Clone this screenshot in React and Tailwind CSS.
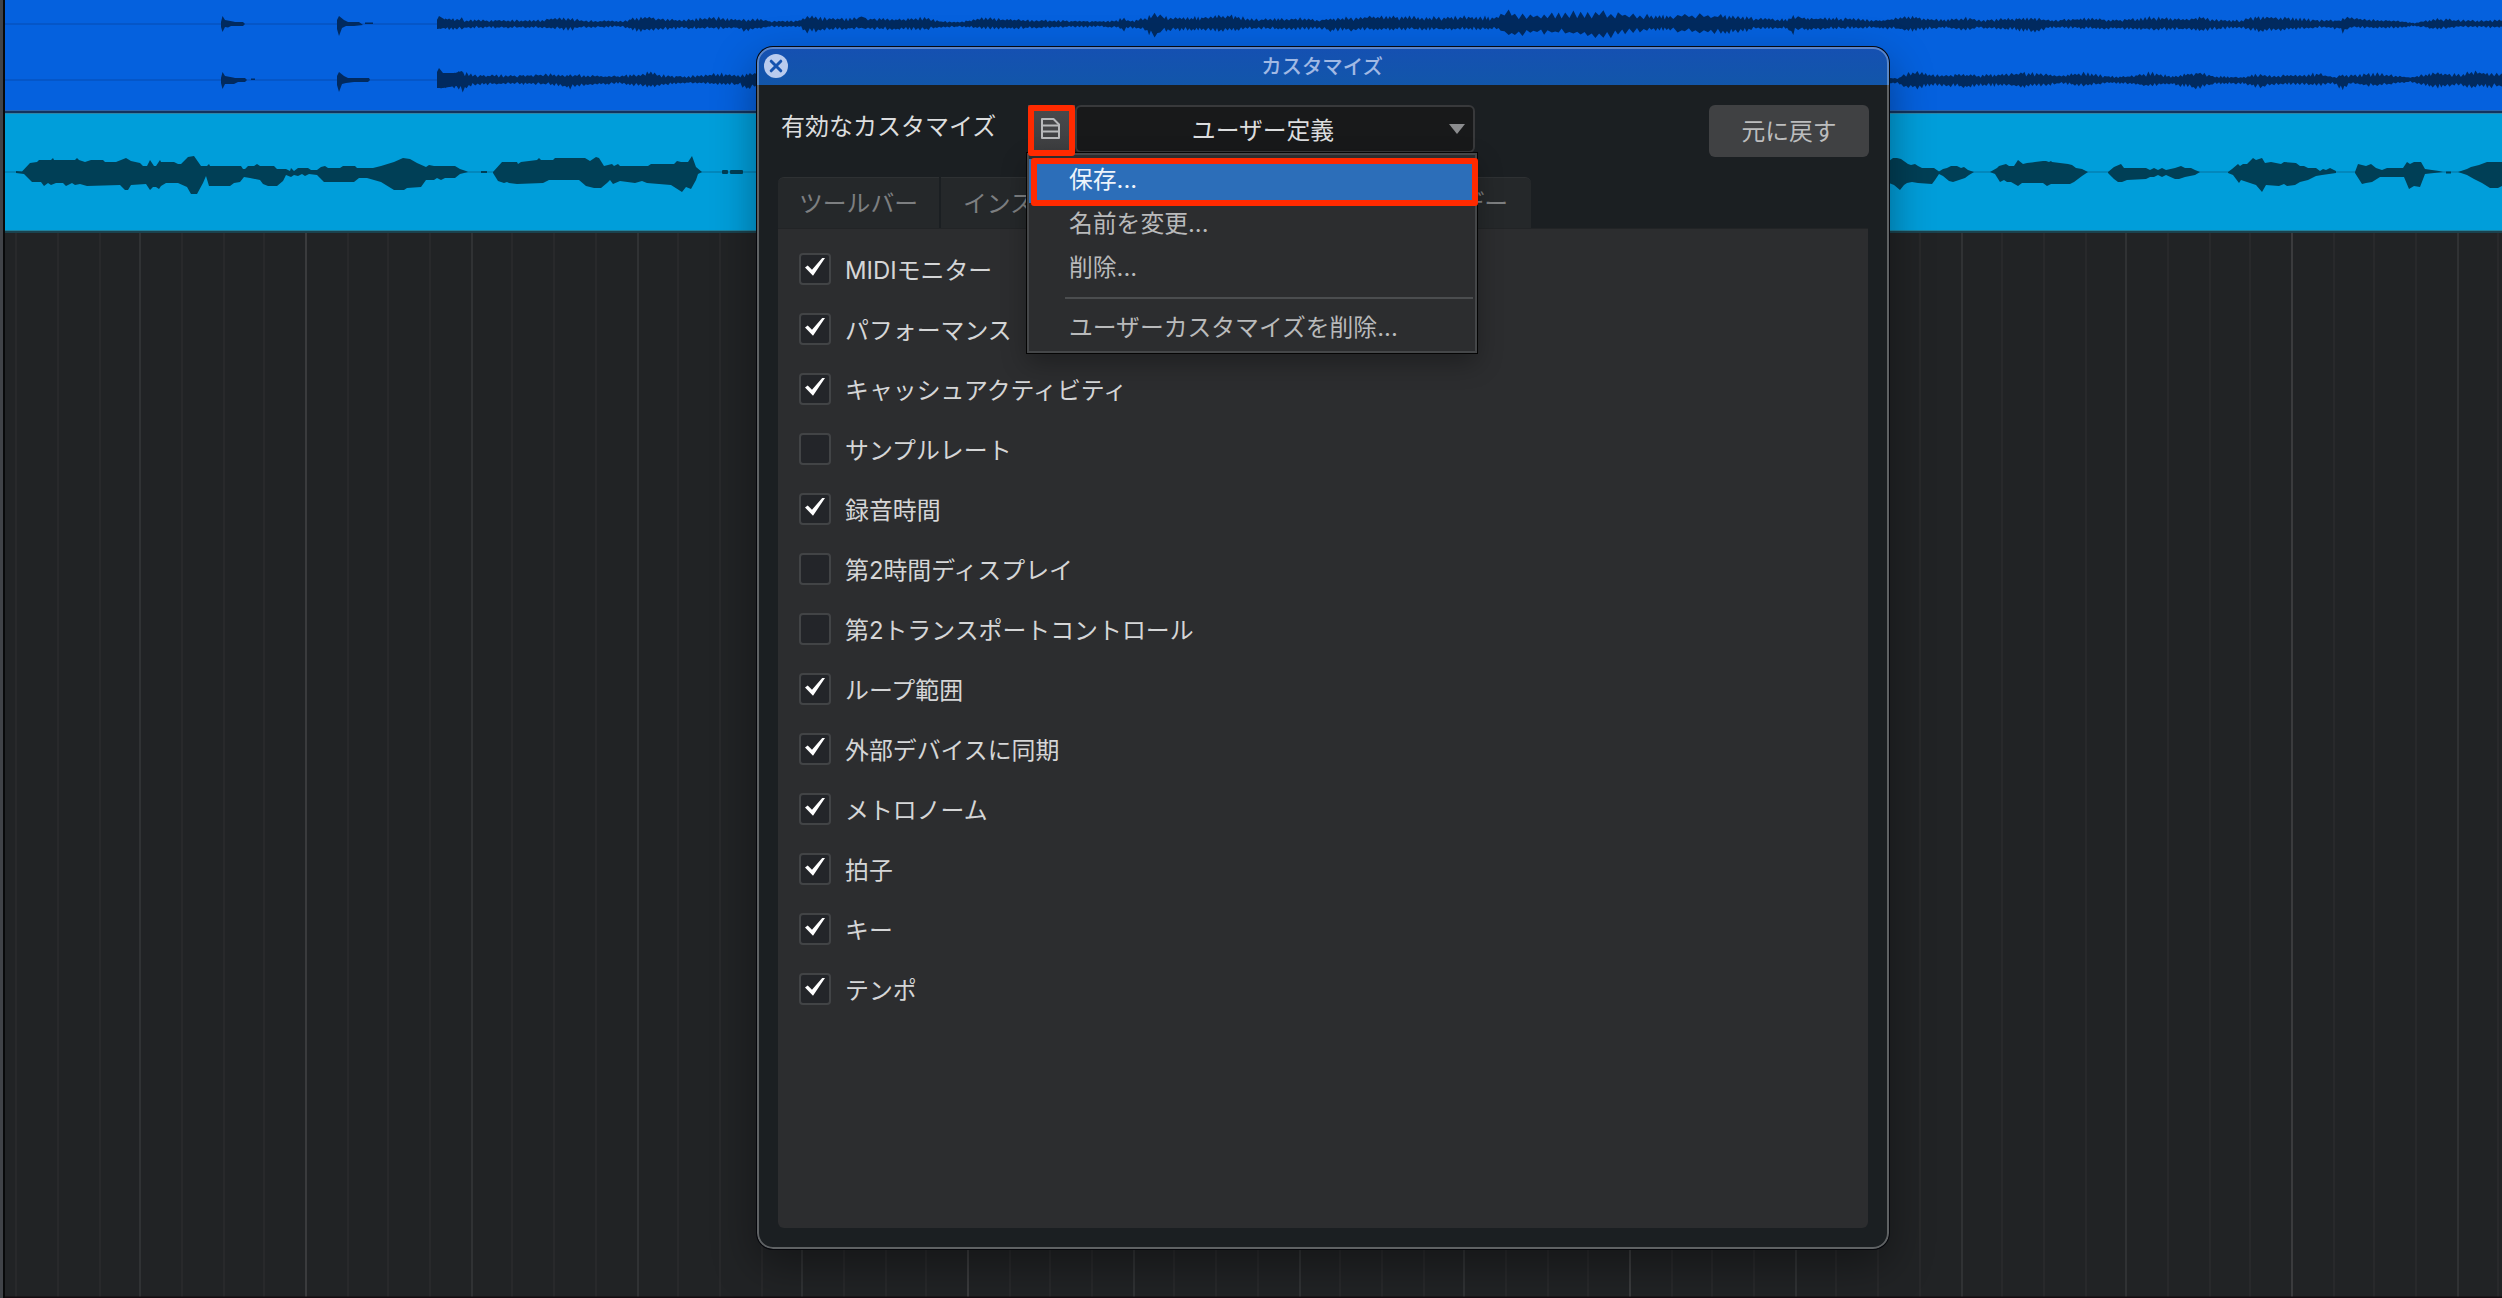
import { useState } from "react";
import clsx from "clsx";

const FONT = "font-['Inter','Noto_Sans_CJK_JP',sans-serif]";

const OPTIONS = [
  { label: "MIDIモニター", checked: true },
  { label: "パフォーマンス", checked: true },
  { label: "キャッシュアクティビティ", checked: true },
  { label: "サンプルレート", checked: false },
  { label: "録音時間", checked: true },
  { label: "第2時間ディスプレイ", checked: false },
  { label: "第2トランスポートコントロール", checked: false },
  { label: "ループ範囲", checked: true },
  { label: "外部デバイスに同期", checked: true },
  { label: "メトロノーム", checked: true },
  { label: "拍子", checked: true },
  { label: "キー", checked: true },
  { label: "テンポ", checked: true },
];

// envelope points: x, height above the centre line, depth below it
const STEREO_TOP = [
  [437, 6, 5], [463, 6, 6], [466, 3, 4], [470, 4, 4], [540, 4, 4], [550, 6, 5], [572, 6, 6], [580, 4, 4],
  [615, 3, 3], [628, 4, 4], [634, 7, 7], [650, 7, 7], [660, 6, 6], [680, 4, 5], [718, 7, 5], [735, 5, 4],
  [747, 5, 8], [755, 6, 5], [770, 3, 3], [800, 4, 3], [807, 8, 9], [830, 6, 6], [858, 6, 5], [861, 12, 5],
  [864, 6, 5], [900, 5, 6], [925, 7, 6], [940, 3, 4], [960, 2, 3], [985, 7, 5], [1000, 5, 5], [1040, 4, 4],
  [1100, 3, 3], [1118, 4, 4], [1123, 8, 7], [1130, 3, 4], [1145, 6, 6], [1154, 12, 15], [1160, 10, 9],
  [1172, 7, 6], [1200, 7, 7], [1230, 9, 7], [1255, 5, 5], [1300, 6, 6], [1320, 4, 5], [1330, 6, 7],
  [1380, 8, 6], [1440, 7, 6], [1470, 8, 6], [1498, 7, 5], [1503, 15, 10], [1515, 10, 13], [1530, 9, 9],
  [1560, 11, 10], [1580, 12, 11], [1606, 12, 14], [1630, 10, 8], [1660, 8, 6], [1680, 10, 8], [1720, 9, 9],
  [1740, 8, 9], [1755, 6, 5], [1788, 5, 5], [1791, 7, 14], [1795, 10, 7], [1808, 6, 6], [1840, 6, 5],
  [1880, 4, 4], [1910, 8, 7], [1925, 6, 6], [1945, 4, 4], [1968, 7, 7], [1980, 4, 4], [2025, 7, 7],
  [2038, 6, 8], [2050, 4, 4], [2090, 6, 5], [2120, 4, 5], [2150, 7, 6], [2190, 5, 6], [2200, 8, 8],
  [2210, 5, 6], [2240, 4, 4], [2260, 8, 8], [2300, 6, 5], [2320, 4, 4], [2340, 4, 5], [2343, 6, 11],
  [2348, 7, 4], [2370, 5, 4], [2400, 3, 4], [2415, 1, 2], [2435, 6, 6], [2460, 4, 3], [2502, 4, 4],
];
const STEREO_BOTTOM = [
  [437, 7, 8], [455, 7, 8], [461, 9, 9], [463, 8, 13], [467, 7, 8], [475, 5, 5], [510, 5, 4], [550, 6, 5],
  [571, 5, 9], [578, 6, 6], [600, 4, 5], [620, 4, 4], [645, 7, 7], [650, 8, 7], [665, 5, 5], [690, 4, 3],
  [718, 7, 5], [740, 5, 5], [745, 6, 11], [754, 7, 6], [780, 4, 4], [1886, 2, 3], [1898, 2, 3], [1906, 7, 8],
  [1920, 8, 9], [1932, 5, 5], [1965, 6, 8], [1980, 5, 6], [2025, 8, 7], [2042, 6, 7], [2060, 5, 4],
  [2082, 8, 6], [2110, 4, 3], [2130, 4, 4], [2150, 8, 7], [2170, 4, 4], [2198, 8, 10], [2215, 4, 4],
  [2243, 3, 4], [2258, 6, 8], [2275, 5, 5], [2300, 5, 5], [2318, 7, 6], [2335, 3, 4], [2343, 6, 11],
  [2350, 5, 4], [2375, 7, 7], [2410, 3, 2], [2434, 8, 8], [2460, 6, 5], [2470, 9, 8], [2502, 6, 7],
];
const VOCAL_UP = [
  "16,1 22,.5 30,9 37,10 39,12 51,12 53,14 54,12 75,12 77,14 79,12 85,10 91,12 103,12 105,10 116,10 126,14 131,11 140,9 143,6 147,6 150,12 154,6 156,6 160,12 161,10 174,10 178,8 181,8 188,15 194,16 201,6 207,6 209,8 210,6 241,6 243,3 245,3 248,6 254,6 257,8 260,6 274,6 277,3 286,3 290,1 291,4 294,1 298,4 308,4 311,2 317,2 321,5 325,6 328,4 340,4 343,6 355,6 357,4 373,4 381,6 394,10 403,14 410,13 417,9 426,5 429,7 434,6 455,6 460,3 466,1 468,0",
  "493,0 502,10 517,10 518,8 521,10 537,12 539,14 541,12 553,12 555,14 585,14 590,11 596,15 599,14 604,6 612,8 614,6 618,8 620,6 648,6 651,8 674,8 677,11 681,10 688,10 692,16 696,5 702,0",
  "1860,10 1880,9 1889,11 1893,14 1897,14 1901,13 1908,8 1911,7 1915,8 1918,6 1922,4 1934,4 1939,.5 1943,3 1947,4 1951,6 1957,6 1961,4 1964,5 1968,2 1974,0",
  "1990,0 1997,4 1999,6 2006,8 2009,6 2014,6 2018,12 2023,8 2027,9 2035,10 2043,11 2046,11 2049,10 2051,11 2052,10 2068,8 2072,7 2076,4 2082,3 2088,0",
  "2108,0 2114,5 2121,8 2124,4 2146,4 2150,2 2154,4 2158,2 2162,4 2166,2 2175,4 2181,6 2185,4 2191,4 2195,2 2200,0",
  "2228,0 2232,3 2238,8 2240,6 2243,8 2247,8 2253,14 2256,12 2262,14 2265,9 2271,10 2281,8 2284,10 2296,9 2300,6 2304,6 2308,4 2316,4 2320,1 2323,3 2326,2 2330,4 2336,1",
  "2355,0 2358,8 2366,6 2371,8 2376,4 2382,2 2387,4 2403,4 2407,10 2410,8 2414,10 2421,10 2425,3 2439,1 2443,0",
  "2458,0 2467,3 2471,5 2479,7 2487,10 2502,10",
];
const VOCAL_DOWN = [
  "16,1 24,2 32,10 41,10 44,14 48,11 51,13 56,11 63,11 66,14 72,11 75,13 80,12 87,14 120,13 125,18 128,18 131,13 146,12 150,18 153,15 156,15 159,17 161,14 166,11 178,11 187,15 191,22 197,22 203,11 206,4 209,14 230,14 234,11 240,10 244,5 250,6 260,8 263,12 268,14 277,14 283,9 286,3 291,5 294,3 298,4 302,2 305,4 309,2 317,3 324,10 354,10 359,6 367,6 381,10 394,18 404,18 407,16 421,15 426,8 434,8 437,6 441,8 445,6 455,6 460,2 468,0",
  "493,1 498,9 504,11 507,10 509,11 517,12 543,11 549,8 579,8 586,14 594,16 601,16 607,11 610,8 613,12 620,9 635,11 642,9 647,11 671,13 682,20 686,15 691,17 696,8 698,2 702,0",
  "1860,9 1889,11 1894,13 1900,18 1904,13 1907,11 1912,10 1918,11 1932,12 1935,8 1939,2 1943,4 1949,9 1953,10 1959,8 1965,6 1969,3 1974,0",
  "1990,0 1995,2 2000,10 2004,8 2007,10 2011,10 2018,14 2022,11 2043,11 2047,14 2051,12 2070,12 2074,10 2078,7 2082,4 2088,0",
  "2108,1 2114,7 2118,10 2122,10 2127,8 2146,7 2150,5 2154,5 2158,3 2162,5 2166,3 2175,7 2179,7 2185,5 2195,3 2200,0",
  "2228,1 2233,3 2239,11 2241,8 2247,10 2256,13 2262,20 2266,13 2279,14 2284,12 2287,14 2295,13 2300,10 2308,8 2316,4 2322,3 2336,1",
  "2355,1 2362,12 2366,11 2372,10 2380,5 2404,5 2409,17 2414,14 2420,15 2425,2 2443,0",
  "2458,0 2467,3 2474,7 2482,11 2490,16 2498,16 2502,14",
];

const parse = (s) => s.split(" ").map((p) => p.split(",").map(Number));

const blobPoints = (up, down, cy) =>
  [
    ...parse(up).map(([x, h]) => `${x},${cy - h}`),
    ...parse(down).reverse().map(([x, h]) => `${x},${cy + h}`),
  ].join(" ");

// dense band that follows an envelope, with a fixed-seed ripple on both edges
function bandPoints(env, cy, seed) {
  let s = seed;
  const rand = () => {
    s = (s * 16807) % 2147483647;
    return s / 2147483647;
  };
  const top = [];
  const bottom = [];
  let i = 0;
  let flip = 0;
  let x = env[0][0];
  while (x <= 2504) {
    while (i < env.length - 2 && env[i + 1][0] < x) i++;
    const [x0, u0, d0] = env[i];
    const [x1, u1, d1] = env[i + 1];
    const t = (x - x0) / (x1 - x0);
    const u = u0 + (u1 - u0) * t;
    const d = d0 + (d1 - d0) * t;
    flip = 1 - flip;
    const k = flip ? 0.85 + rand() * 0.3 : 0.45 + rand() * 0.35;
    const m = flip ? 0.85 + rand() * 0.3 : 0.45 + rand() * 0.35;
    top.push(`${x.toFixed(1)},${(cy - u * k).toFixed(1)}`);
    bottom.push(`${x.toFixed(1)},${(cy + d * m).toFixed(1)}`);
    // loud passages swing more slowly
    x += u > 9 ? 2.8 + rand() * 1.6 : 1.5 + rand() * 1.2;
  }
  return [...top, ...bottom.reverse()].join(" ");
}

function StereoTrack() {
  return (
    <div className="h-[113px] bg-[#0561de] border-b-2 border-[#12345f]">
      <svg width="2502" height="111" className="block">
        <g fill="#0556c8">
          <rect x="5" y="23" width="432" height="2" />
          <rect x="5" y="79" width="432" height="2" />
        </g>
        <g fill="#012a5f">
          <polygon points="221,22 222.5,16 225,20 233,21.5 235,22 243,22 245,24 243,26 231,26 228,27.5 225,27 222.5,32 221,27" />
          <polygon points="221,78 222.5,72 225,76 233,77.5 235,78 245,78 247,80 245,82 238,82 234,84 225,84 222.5,89 221,83" />
          <polygon points="337,20 339,16 344,20 348,22 359,22 363,25 354,26 346,26 342,28 339,36 337,29" />
          <polygon points="337,76 339,72 344,76 348,78 369,78 370,80 368,82 354,82 346,83 342,84 339,92 337,85" />
          <rect x="365" y="22.5" width="8" height="1.5" />
          <rect x="251" y="78.5" width="4" height="1.5" />
          <polygon points={bandPoints(STEREO_TOP, 24, 11)} />
          <polygon points={bandPoints(STEREO_BOTTOM, 80, 47)} />
          <polygon points="437,20 439,16 444,19 444,28 437,29" />
          <polygon points="437,72 439,68 443,73 455,73 462,71 462,86 455,86 443,88 437,88" />
        </g>
        <rect y="110" width="2502" height="1" fill="#2d63a8" />
      </svg>
    </div>
  );
}

function VocalTrack() {
  return (
    <div className="h-[120px] bg-[#009eda] border-t border-b-2 border-t-[#3087a6] border-b-[#1b424e]">
      <svg width="2502" height="117" viewBox="0 114 2502 117" className="block">
        <rect x="5" y="171" width="2497" height="2" fill="#0288bd" />
        <g fill="#003f56">
          {VOCAL_UP.map((up, i) => (
            <polygon key={i} points={blobPoints(up, VOCAL_DOWN[i], 172)} />
          ))}
          <rect x="481" y="171" width="6" height="2" />
          <rect x="722" y="170" width="6" height="4" rx="1" />
          <rect x="730" y="170" width="13" height="4" rx="1" />
          <rect x="2446" y="171.5" width="5" height="2" />
        </g>
        <rect y="230" width="2502" height="1" fill="#22809b" />
      </svg>
    </div>
  );
}

function Grid() {
  const lines = [];
  for (let k = -8; k < 54; k++) {
    const x = 305 + 2 * Math.round((k * 41.375) / 2);
    const color = k % 16 === 0 ? "#3a3b3d" : k % 4 === 0 ? "#303234" : "#28292b";
    if (x > 5) lines.push(<rect key={k} x={x} y="0" width="2" height="1065" fill={color} />);
  }
  return (
    <svg width="2502" height="1065" className="block bg-[#212325]">
      {lines}
      <rect y="1063.5" width="2502" height="1.5" fill="#140d11" />
    </svg>
  );
}

function Checkbox({ label, checked, onChange }) {
  return (
    <button type="button" onClick={onChange} className="flex h-[60px] items-center gap-3.5 text-left">
      <span className="flex size-8 items-center justify-center rounded-[4px] border-2 border-[#424446] bg-[#232529]">
        {checked && (
          <svg width="20" height="18" viewBox="0 0 20 18" className="-mt-1">
            <path d="M0 9.5L2.7 7.6L7 11.8L17.2 0H20L8 17.8Z" fill="#fff" />
          </svg>
        )}
      </span>
      <span className="pt-[3px] text-[23.9px] leading-none text-[#d5d6d7]">{label}</span>
    </button>
  );
}

function PresetMenu() {
  return (
    <div className="absolute left-[1027px] top-[153px] h-[200px] w-[450px] border-2 border-[#454749] bg-[#2c2d2f] text-[23.8px] leading-none text-[#b9babb] shadow-[0_0_0_1px_#050505,0_10px_24px_rgba(0,0,0,0.3)]">
      <div className="mt-1 flex h-[44px] items-center bg-[#2c6eb9] pl-[40px] pb-[3px] text-[#eef4fb]">保存...</div>
      <div className="flex h-[44px] items-center pl-[40px] pb-[3px]">名前を変更...</div>
      <div className="flex h-[44px] items-center pl-[40px] pb-[3px]">削除...</div>
      <div className="ml-[36px] mr-0.5 mt-1.5 h-0.5 bg-[#4b4d4f]" />
      <div className="flex h-[56px] items-center pl-[40px] pt-px">ユーザーカスタマイズを削除...</div>
    </div>
  );
}

export default function App() {
  const [options, setOptions] = useState(OPTIONS);

  const toggle = (index) =>
    setOptions(options.map((o, i) => (i === index ? { ...o, checked: !o.checked } : o)));

  return (
    <div className={clsx("relative h-[1298px] w-[2502px] overflow-hidden bg-[#212325]", FONT)}>
      <StereoTrack />
      <VocalTrack />
      <Grid />
      <div className="absolute left-0 top-0 h-full w-[5px] border-l-[3px] border-[#404348] bg-[#08090a]" />

      <div className="absolute left-[757px] top-[47px] flex h-[1202px] w-[1132px] flex-col overflow-hidden rounded-[16px] bg-[#1b1f22] shadow-[0_0_0_1px_#06070c,0_16px_44px_rgba(0,0,0,0.38)]">
        <div className="flex h-[38px] shrink-0 items-center bg-linear-to-b from-[#1550b2] to-[#1256aa] pl-[7px] pr-[33px]">
          <svg width="24" height="24" viewBox="0 0 24 24">
            <circle cx="12" cy="12" r="12" fill="#b9cbee" />
            <path d="M7.2 7.2L16.8 16.8M16.8 7.2L7.2 16.8" stroke="#1552ae" strokeWidth="3" strokeLinecap="round" />
          </svg>
          <div className="flex-1 pt-[3px] text-center text-[20.4px] font-medium leading-none text-[#a1b9e4]">カスタマイズ</div>
        </div>

        <div className="flex h-[72px] shrink-0 pl-6 pr-5 pt-5">
          <div className="w-[247px] pt-[10px] text-2xl leading-none text-[#dcddde]">有効なカスタマイズ</div>
          <button type="button" className="flex h-[50px] w-[47px] items-center bg-linear-to-b from-[#4a4b4e] to-[#3b3c3e] pl-[13px]">
            <svg width="19" height="21" viewBox="0 0 19 21" fill="none" stroke="#b8b9bb" strokeWidth="2" className="-mt-[3px]">
              <path d="M1 1H12.5L18 6.5V20H1Z" strokeLinejoin="round" />
              <path d="M1 7.5H18M1 13.5H18" />
            </svg>
          </button>
          <button type="button" className="flex h-[48px] w-[400px] items-center rounded-[6px] border-2 border-[#38393b] bg-[#18191a] pr-2 text-[23.8px] leading-none text-[#dcddde]">
            <span className="flex-1 pt-[3px] text-center">ユーザー定義</span>
            <svg width="16" height="10" viewBox="0 0 16 10">
              <path d="M0 0H16L8 10Z" fill="#8b8c8e" />
            </svg>
          </button>
          <button type="button" className="ml-auto h-[52px] w-[160px] rounded-[6px] bg-[#404143] pt-0.5 text-[23.8px] leading-none text-[#bcbdbe]">
            元に戻す
          </button>
        </div>

        <div className="ml-[21px] mt-5 flex h-[51px] w-[753px] shrink-0 gap-0.5 text-[23.8px] leading-none text-[#7d7f81]">
          <div className="flex w-[161px] items-center justify-center rounded-tl-[6px] border-t border-[#2e3133] bg-[#25282a] pt-0.5">ツールバー</div>
          <div className="flex flex-1 items-center justify-between rounded-tr-[6px] border-t border-[#2e3133] bg-[#25282a] pl-[22px] pr-[23px] pt-0.5">
            <span>インス</span>
            <span>デー</span>
          </div>
        </div>

        <div className="mx-[21px] mb-[21px] flex-1 rounded-b-[6px] border-t border-[#222426] bg-[#2c2d2f] pl-[21px] pt-[10px]">
          {options.map((option, i) => (
            <div key={option.label} className="flex">
              <Checkbox label={option.label} checked={option.checked} onChange={() => toggle(i)} />
            </div>
          ))}
        </div>

        <div className="pointer-events-none absolute inset-0 rounded-[16px] border-2 border-white/30" />
      </div>

      <PresetMenu />

      {/* callouts */}
      <div className="absolute left-[1028px] top-[105px] h-[51px] w-[47px] rounded-[3px] border-6 border-[#ff2a00]" />
      <div className="absolute left-[1031px] top-[158px] h-[48px] w-[447px] rounded-[3px] border-6 border-[#ff2a00]" />
    </div>
  );
}
